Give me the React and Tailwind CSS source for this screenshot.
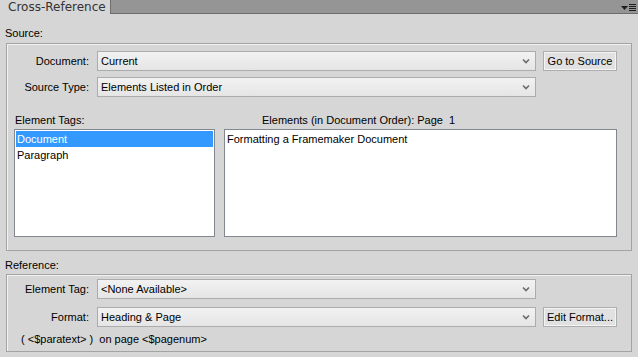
import React from 'react';

const ui = { fontFamily: '"Liberation Sans", Arial, sans-serif' };

const Chevron = () => (
  <svg width="8" height="6" viewBox="0 0 8 6" className="shrink-0">
    <path d="M1 1.5 L4 4.5 L7 1.5" fill="none" stroke="#6b6b6b" strokeWidth="1.6" />
  </svg>
);

const Select = ({ value }) => (
  <div className="flex h-[20px] w-[439px] items-center justify-between border border-[#acacac] bg-gradient-to-b from-[#f2f2f2] to-[#e5e5e5] pl-[3px] pr-[5px] text-[11px] text-black">
    <span>{value}</span>
    <Chevron />
  </div>
);

const Button = ({ children }) => (
  <div className="ml-[7px] flex h-[20px] w-[74px] items-center justify-center whitespace-nowrap border border-[#adadad] bg-[#e1e1e1] text-[11px] text-black shadow-[inset_0_0_0_1px_#f4f4f4]">
    {children}
  </div>
);

const Row = ({ label, value, button }) => (
  <div className="flex items-center">
    <div className="w-[83px] pr-[8px] text-right text-[11px] text-black">{label}</div>
    <Select value={value} />
    {button && <Button>{button}</Button>}
  </div>
);

const Group = ({ className, children }) => (
  <div className={`mx-[6px] border border-[#a3a3a3] shadow-[inset_1px_1px_0_#f3f3f3] ${className}`}>
    {children}
  </div>
);

export default function App() {
  return (
    <div className="h-[357px] w-[638px] overflow-hidden bg-[#d6d6d6]" style={ui}>
      {/* panel tab bar */}
      <div className="flex h-[14px] items-stretch bg-[#959595] shadow-[inset_0_-1px_0_#6e6e6e]">
        <div
          className="flex w-[111px] items-center border-r border-[#6e6e6e] bg-[#d6d6d6] pl-[8px] text-[12px] leading-none text-[#333]"
          style={{ fontFamily: '"DejaVu Sans", Verdana, sans-serif' }}
        >
          Cross-Reference
        </div>
        <div className="flex-1" />
        <div className="flex items-center gap-[1px] pr-[2px] pt-[1px]">
          <svg width="7" height="4" viewBox="0 0 7 4">
            <path d="M0 0 H7 L3.5 4 Z" fill="#1e1e1e" />
          </svg>
          <div className="flex w-[7px] flex-col gap-[1px]">
            <div className="h-[1px] bg-[#1e1e1e]" />
            <div className="h-[1px] bg-[#1e1e1e]" />
            <div className="h-[1px] bg-[#1e1e1e]" />
            <div className="h-[1px] bg-[#1e1e1e]" />
          </div>
        </div>
      </div>

      <div className="mt-[11px] h-[16px] pl-[5px] text-[11px] leading-[16px] text-black">Source:</div>

      <Group className="mt-[2px] h-[208px] pl-[7px] pt-[7px]">
        <div className="flex flex-col gap-[6px]">
          <Row label="Document:" value="Current" button="Go to Source" />
          <Row label="Source Type:" value="Elements Listed in Order" />
        </div>

        <div className="mt-[16px] flex h-[14px] text-[11px] leading-[14px] text-black">
          <div className="w-[248px] pl-[1px]">Element Tags:</div>
          <div>Elements (in Document Order): Page&nbsp; 1</div>
        </div>

        <div className="mt-[2px] flex gap-[9px]">
          <div className="h-[108px] w-[201px] border border-[#828790] bg-white p-[1px] text-[11px] leading-[16px]">
            <div className="bg-[#3399ff] pl-[1px] text-white">Document</div>
            <div className="pl-[1px] text-black">Paragraph</div>
          </div>
          <div className="h-[108px] w-[393px] border border-[#828790] bg-white p-[1px] text-[11px] leading-[16px] text-black">
            <div className="pl-[1px]">Formatting a Framemaker Document</div>
          </div>
        </div>
      </Group>

      <div className="mt-[6px] h-[16px] pl-[5px] text-[11px] leading-[16px] text-black">Reference:</div>

      <Group className="mt-[1px] h-[78px] pl-[7px] pt-[4px]">
        <div className="flex flex-col gap-[8px]">
          <Row label="Element Tag:" value="<None Available>" />
          <Row label="Format:" value="Heading & Page" button="Edit Format..." />
        </div>
        <div className="mt-[5px] h-[14px] pl-[7px] text-[11px] leading-[14px] text-black">
          (&nbsp;&lt;$paratext&gt;&nbsp;)&nbsp; on page &lt;$pagenum&gt;
        </div>
      </Group>
    </div>
  );
}
